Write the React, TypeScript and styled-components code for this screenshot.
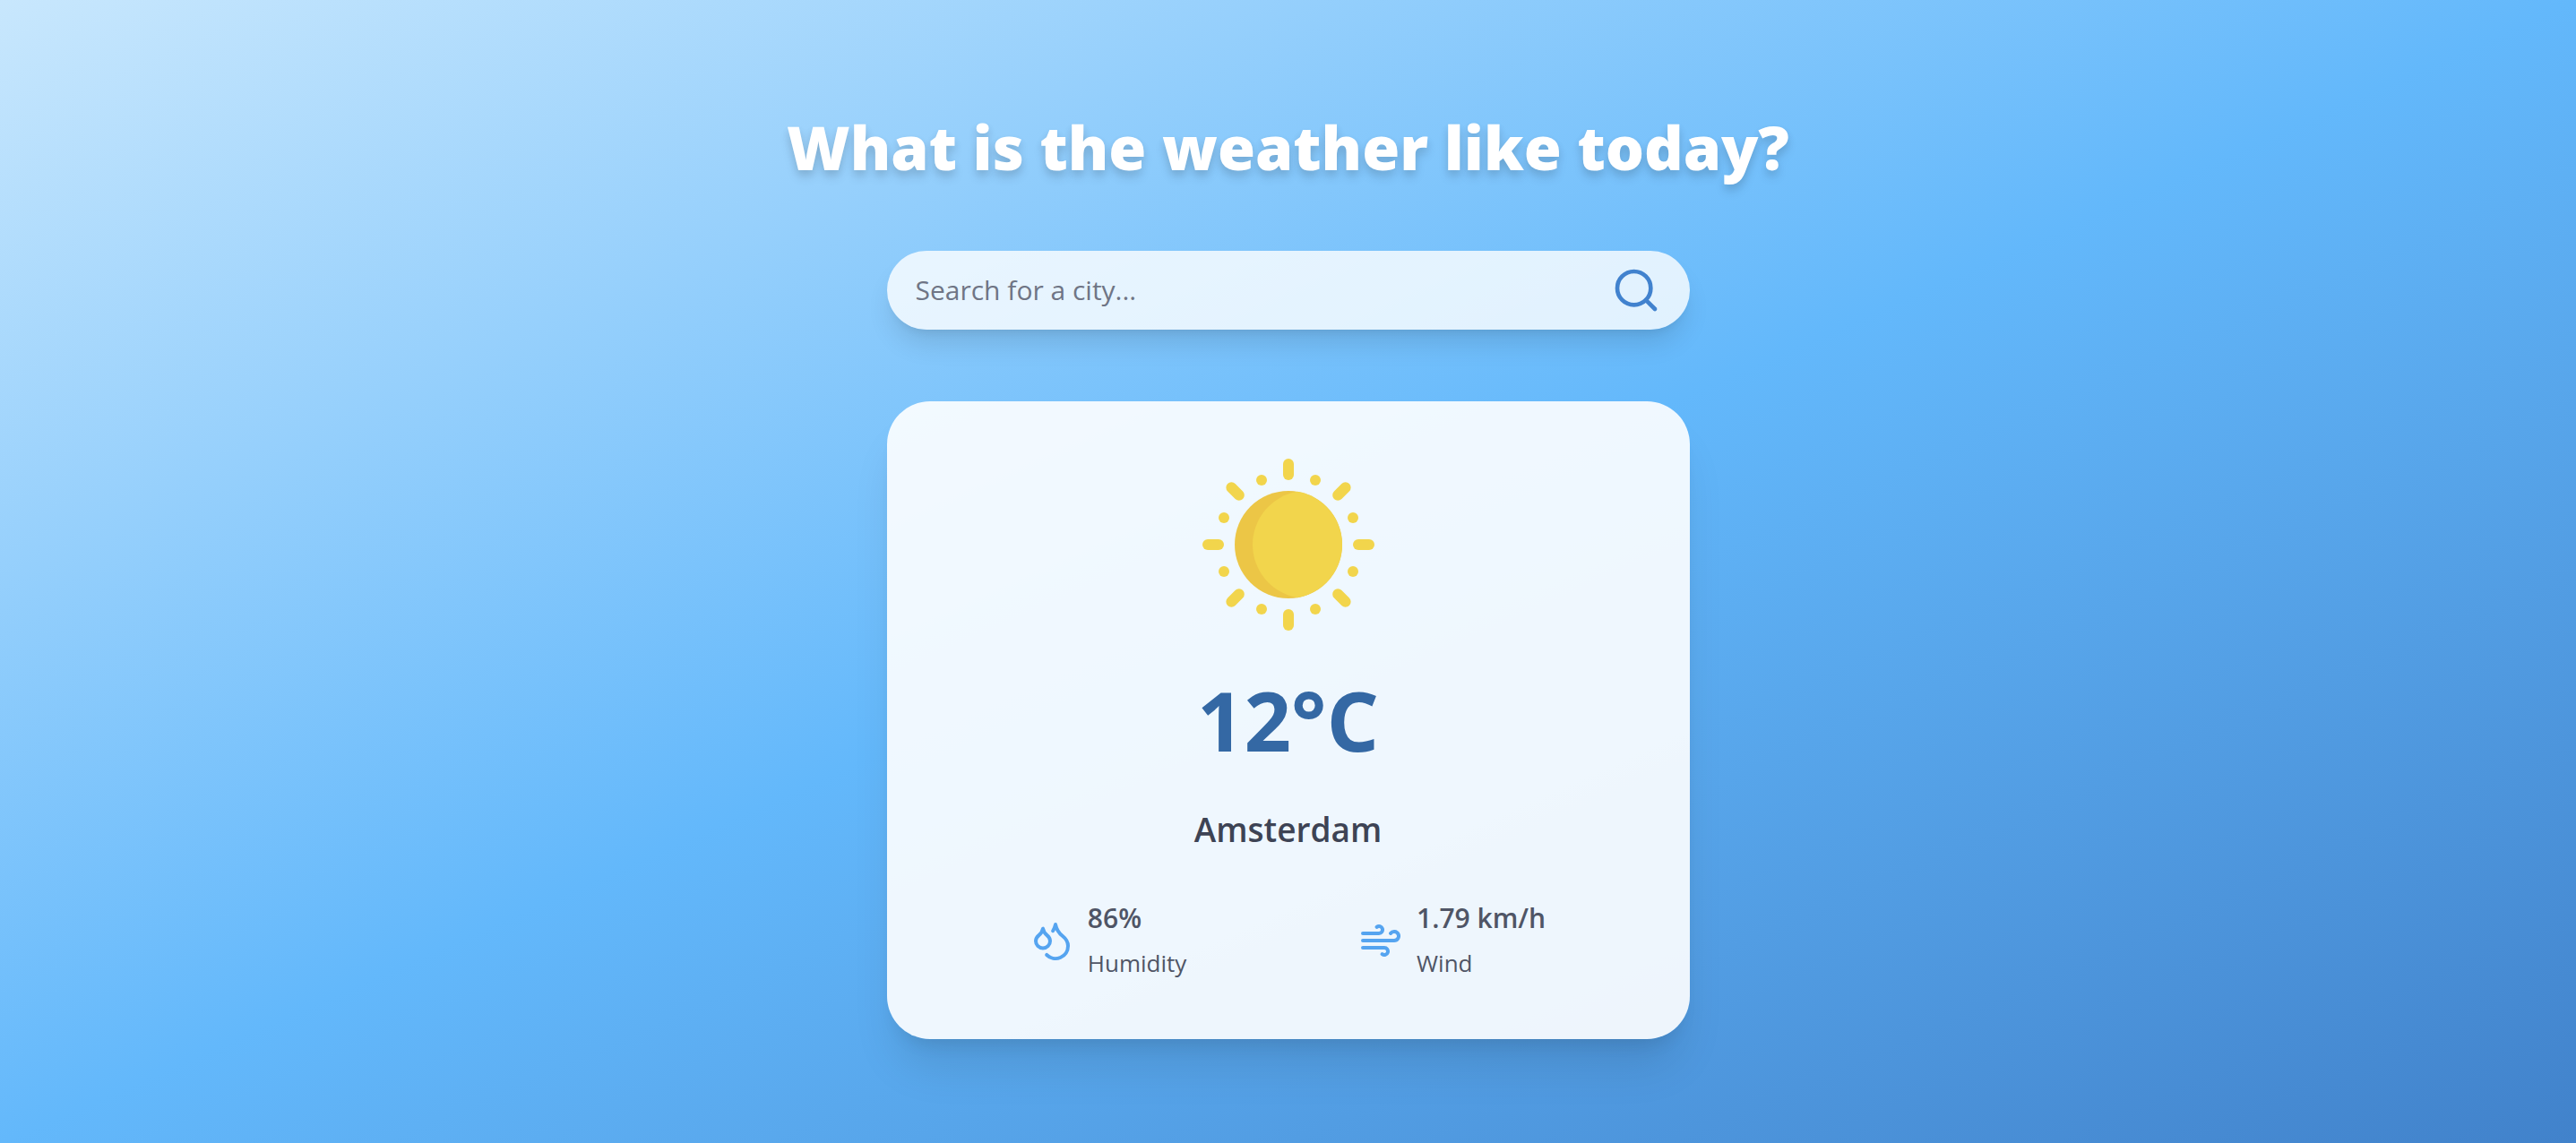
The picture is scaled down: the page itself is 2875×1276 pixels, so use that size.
import React, { useState } from "react";
import styled, { createGlobalStyle } from "styled-components";
import { Droplets, Wind } from "lucide-react";

const GlobalStyle = createGlobalStyle`
  * { box-sizing: border-box; }
  body {
    margin: 0;
    font-family: "Open Sans", "Noto Sans", sans-serif;
    color: #4f5566;
  }
`;

const Page = styled.main`
  min-height: 100vh;
  padding: 120px 32px 80px;
  display: flex;
  flex-direction: column;
  align-items: center;
  background: linear-gradient(to bottom right, #c8e7fd 0%, #63b8fb 50%, #4182cb 100%);
`;

const Title = styled.h1`
  margin: 0 0 72px;
  font-size: 68px;
  line-height: 88px;
  font-weight: 800;
  text-align: center;
  color: #ffffff;
  text-shadow: 0 8px 12px rgba(0, 0, 0, 0.1), 0 4px 8px rgba(0, 0, 0, 0.08);
`;

const SearchForm = styled.form`
  width: 100%;
  max-width: 896px;
  height: 88px;
  padding: 0 32px;
  margin: 0 0 80px;
  display: flex;
  align-items: center;
  gap: 16px;
  border-radius: 44px;
  background: rgba(255, 255, 255, 0.8);
  box-shadow: 0 20px 30px -6px rgba(0, 0, 0, 0.12), 0 8px 12px -8px rgba(0, 0, 0, 0.1);
`;

const SearchInput = styled.input`
  flex: 1;
  min-width: 0;
  padding: 0;
  border: 0;
  outline: 0;
  background: transparent;
  font: inherit;
  font-size: 30px;
  line-height: 50px;
  color: #2d3748;
  &::placeholder {
    color: #6f7585;
    opacity: 1;
  }
`;

const SearchButton = styled.button`
  display: flex;
  padding: 0;
  border: 0;
  background: transparent;
  color: #4182ce;
  cursor: pointer;
`;

const Card = styled.section`
  width: 100%;
  max-width: 896px;
  padding: 64px 64px 60px;
  display: flex;
  flex-direction: column;
  align-items: center;
  border-radius: 48px;
  background: rgba(255, 255, 255, 0.9);
  box-shadow: 0 40px 50px -10px rgba(0, 0, 0, 0.1), 0 16px 20px -12px rgba(0, 0, 0, 0.1);
`;

const Temperature = styled.p`
  margin: 48px 0 40px;
  font-size: 92px;
  line-height: 104px;
  font-weight: 700;
  color: #3468a4;
`;

const City = styled.h2`
  margin: 0 0 44px;
  font-size: 37px;
  line-height: 60px;
  font-weight: 600;
  color: #3d4354;
`;

const Stats = styled.div`
  width: 100%;
  display: flex;
  justify-content: space-around;
`;

const Stat = styled.div`
  display: flex;
  align-items: center;
  gap: 16px;
  line-height: 50px;
  svg { color: #55a4f0; }
`;

const StatValue = styled.p`
  margin: 0;
  font-size: 30px;
  font-weight: 600;
`;

const StatLabel = styled.p`
  margin: 0;
  font-size: 26px;
`;

const SearchIcon = () => (
  <svg width="56" height="56" viewBox="0 0 24 24" fill="none" stroke="currentColor" strokeWidth="2" strokeLinecap="round" strokeLinejoin="round" aria-hidden="true">
    <circle cx="11" cy="11" r="8" />
    <line x1="21" y1="21" x2="16.65" y2="16.65" />
  </svg>
);

const rayAngles = [0, 45, 90, 135, 180, 225, 270, 315];
const dots = [
  [30, 72], [72, 30], [72, -30], [30, -72],
  [-30, -72], [-72, -30], [-72, 30], [-30, 72],
];

const SunIcon = () => (
  <svg width="192" height="192" viewBox="-96 -96 192 192" role="img" aria-label="Sunny">
    <circle r="60" fill="#ecc646" />
    <path d="M10 -59.16 A60 60 0 0 1 10 59.16 A60 60 0 0 1 10 -59.16 Z" fill="#f2d54c" />
    {rayAngles.map((angle) => (
      <line key={angle} y1="-90" y2="-78" stroke="#f2d54c" strokeWidth="12" strokeLinecap="round" transform={`rotate(${angle})`} />
    ))}
    {dots.map(([x, y]) => (
      <circle key={`${x},${y}`} cx={x} cy={y} r="6" fill="#f2d54c" />
    ))}
  </svg>
);

const stats = [
  { label: "Humidity", value: "86%", Icon: Droplets },
  { label: "Wind", value: "1.79 km/h", Icon: Wind },
];

export default function App() {
  const [query, setQuery] = useState("");

  return (
    <>
      <GlobalStyle />
      <Page>
        <Title>What is the weather like today?</Title>
        <SearchForm role="search" onSubmit={(event) => event.preventDefault()}>
          <SearchInput
            type="text"
            aria-label="City"
            placeholder="Search for a city..."
            value={query}
            onChange={(event) => setQuery(event.target.value)}
          />
          <SearchButton type="submit" aria-label="Search">
            <SearchIcon />
          </SearchButton>
        </SearchForm>
        <Card>
          <SunIcon />
          <Temperature>12°C</Temperature>
          <City>Amsterdam</City>
          <Stats>
            {stats.map(({ label, value, Icon }) => (
              <Stat key={label}>
                <Icon size={48} aria-hidden="true" />
                <div>
                  <StatValue>{value}</StatValue>
                  <StatLabel>{label}</StatLabel>
                </div>
              </Stat>
            ))}
          </Stats>
        </Card>
      </Page>
    </>
  );
}
